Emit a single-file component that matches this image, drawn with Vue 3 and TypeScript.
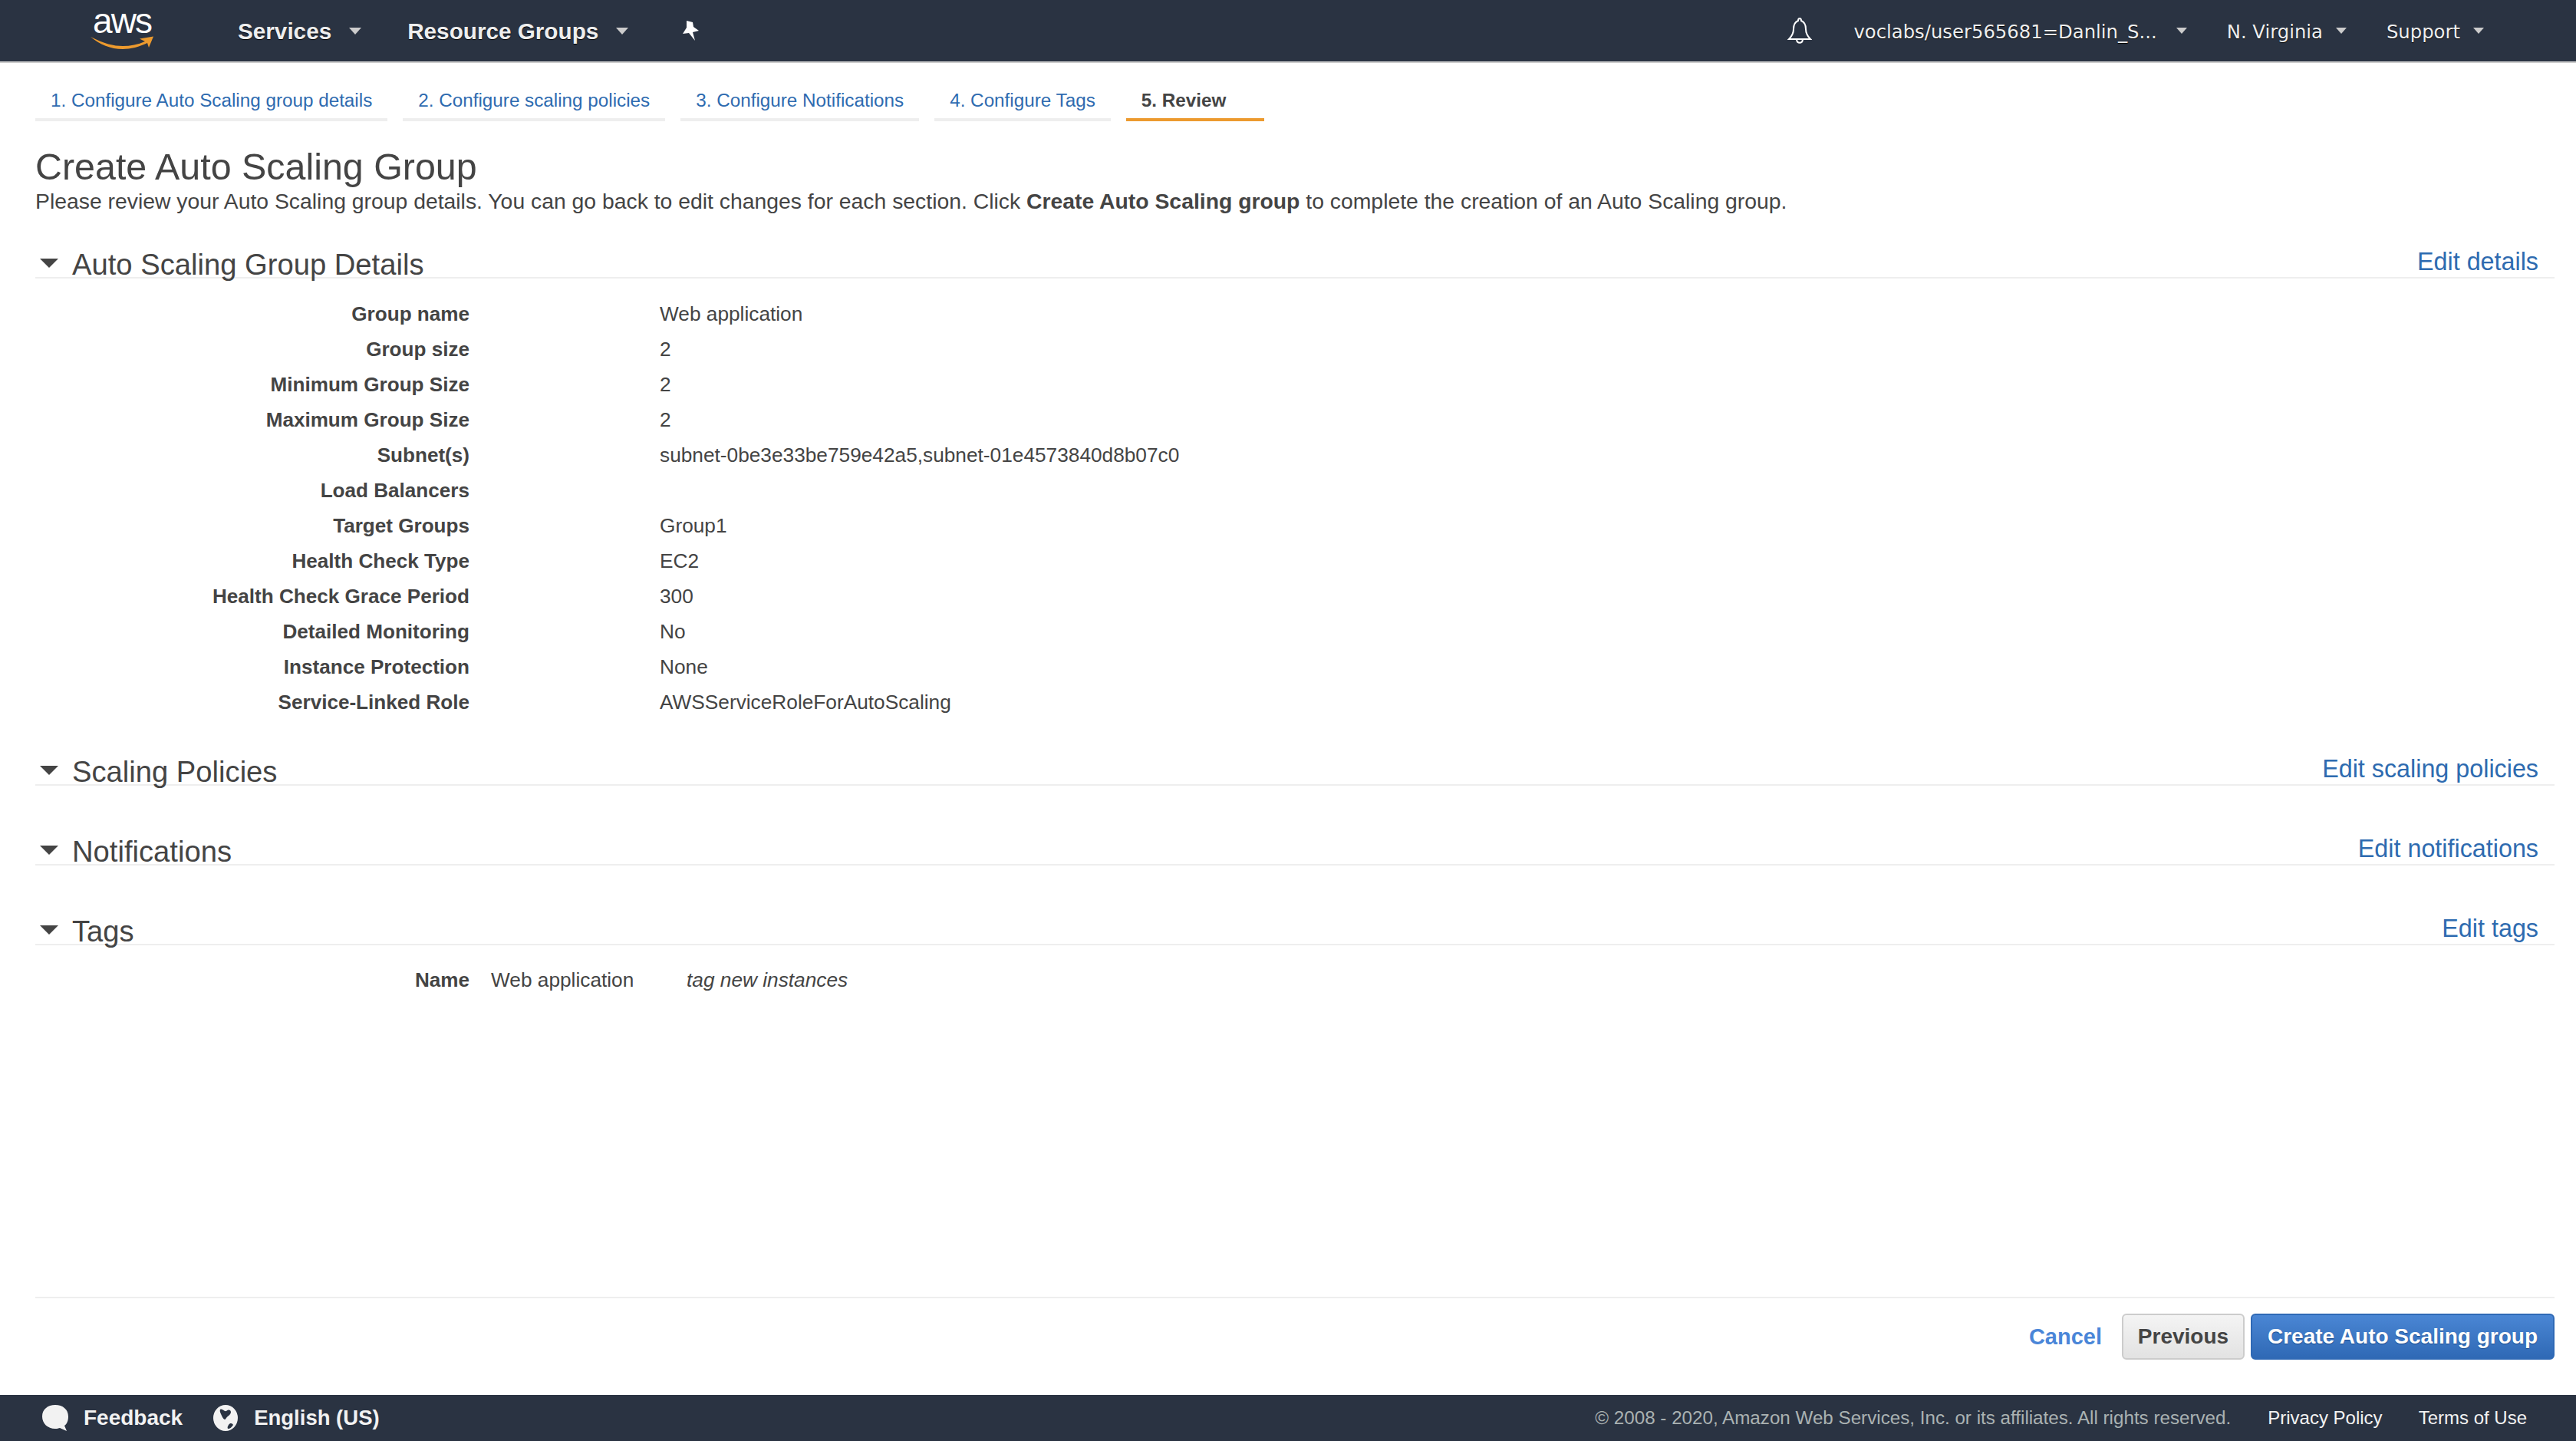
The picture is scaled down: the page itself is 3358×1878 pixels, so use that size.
<script setup lang="ts">
const tabs = [
  { label: '1. Configure Auto Scaling group details', active: false },
  { label: '2. Configure scaling policies', active: false },
  { label: '3. Configure Notifications', active: false },
  { label: '4. Configure Tags', active: false },
  { label: '5. Review', active: true },
]
const rows: [string, string][] = [
  ['Group name', 'Web application'],
  ['Group size', '2'],
  ['Minimum Group Size', '2'],
  ['Maximum Group Size', '2'],
  ['Subnet(s)', 'subnet-0be3e33be759e42a5,subnet-01e4573840d8b07c0'],
  ['Load Balancers', ''],
  ['Target Groups', 'Group1'],
  ['Health Check Type', 'EC2'],
  ['Health Check Grace Period', '300'],
  ['Detailed Monitoring', 'No'],
  ['Instance Protection', 'None'],
  ['Service-Linked Role', 'AWSServiceRoleForAutoScaling'],
]
</script>

<template>
  <div class="page">
    <header class="top">
      <div class="logo">
        <span class="logo-text">aws</span>
        <svg class="smile" viewBox="0 0 82 18" width="82" height="18">
          <path d="M0 1 C18 10 30 13 42 13 C52 13 62 11 71 7 L64 3.5 L82 .5 L76 15 L74 9 C64 14 52 17 42 17 C26 17 12 11 0 1 Z" fill="#ec9a2e" />
        </svg>
      </div>
      <span class="nav-main services">Services</span><i class="caret big"></i>
      <span class="nav-main groups">Resource Groups</span><i class="caret big"></i>
      <svg class="pin" viewBox="0 0 26 28" width="26" height="28">
        <path d="M9 1 L17 3 L18 9 L25 14 L17 16 L20 27 L12 17 L4 18 L9 10 Z" fill="#fff" />
      </svg>
      <div class="spacer"></div>
      <svg class="bell" viewBox="0 0 32 36" width="32" height="36">
        <path d="M16 2 C15 2 14 3 14 5 C9 7 8 11 8 16 C8 22 6 25 2 29 L30 29 C26 25 24 22 24 16 C24 11 23 7 18 5 C18 3 17 2 16 2 Z M12 30 C13 35 19 35 20 30" fill="none" stroke="#fff" stroke-width="2" />
      </svg>
      <span class="nav-sub user">voclabs/user565681=Danlin_S...</span><i class="caret"></i>
      <span class="nav-sub region">N. Virginia</span><i class="caret"></i>
      <span class="nav-sub support">Support</span><i class="caret"></i>
    </header>

    <main class="main">
      <nav class="tabs">
        <a v-for="t in tabs" :key="t.label" class="tab" :class="{ active: t.active }">{{ t.label }}</a>
      </nav>

      <h1 class="title">Create Auto Scaling Group</h1>
      <p class="intro">Please review your Auto Scaling group details. You can go back to edit changes for each section. Click <b>Create Auto Scaling group</b> to complete the creation of an Auto Scaling group.</p>

      <section class="section first">
        <div class="sec-head">
          <i class="tri"></i><h2>Auto Scaling Group Details</h2>
          <a class="edit">Edit details</a>
        </div>
        <div class="details">
          <div v-for="r in rows" :key="r[0]" class="row">
            <span class="lab">{{ r[0] }}</span><span class="val">{{ r[1] }}</span>
          </div>
        </div>
      </section>

      <section class="section policies">
        <div class="sec-head">
          <i class="tri"></i><h2>Scaling Policies</h2>
          <a class="edit">Edit scaling policies</a>
        </div>
      </section>

      <section class="section notes">
        <div class="sec-head">
          <i class="tri"></i><h2>Notifications</h2>
          <a class="edit">Edit notifications</a>
        </div>
      </section>

      <section class="section notes">
        <div class="sec-head">
          <i class="tri"></i><h2>Tags</h2>
          <a class="edit">Edit tags</a>
        </div>
        <div class="tag-row">
          <span class="lab">Name</span>
          <span class="tag-val">Web application</span>
          <em class="tag-note">tag new instances</em>
        </div>
      </section>

      <div class="grow"></div>

      <div class="actions">
        <a class="cancel">Cancel</a>
        <button class="btn prev">Previous</button>
        <button class="btn create">Create Auto Scaling group</button>
      </div>
    </main>

    <footer class="foot">
      <svg class="fb-icon" viewBox="0 0 36 36" width="36" height="36">
        <path d="M18 1 C28 1 35 7 35 16 C35 22 33 26 30 28 L33 35 L24 31 C21 32 19 32 18 32 C8 32 1 25 1 16 C1 7 8 1 18 1 Z" fill="#f2f2f2" />
      </svg>
      <span class="foot-strong feedback">Feedback</span>
      <svg class="globe" viewBox="0 0 34 36" width="34" height="36">
        <ellipse cx="17" cy="18" rx="16" ry="17" fill="#f2f2f2" />
        <path d="M10 7 C13 5 15 10 18 9 C21 7 23 7 24 10 C24 14 20 15 18 18 C16 22 14 19 12 15 C11 12 9 10 10 7 Z M21 27 C23 24 26 25 27 27 C25 30 23 32 20 32 C19 30 20 29 21 27 Z" fill="#2a3342" />
      </svg>
      <span class="foot-strong english">English (US)</span>
      <div class="spacer"></div>
      <span class="copy">© 2008 - 2020, Amazon Web Services, Inc. or its affiliates. All rights reserved.</span>
      <a class="foot-link privacy">Privacy Policy</a>
      <a class="foot-link terms">Terms of Use</a>
    </footer>
  </div>
</template>

<style scoped>
.page {
  width: 3358px;
  height: 1878px;
  display: flex;
  flex-direction: column;
  background: #fff;
  font-family: "Liberation Sans", Arial, sans-serif;
  color: #444;
  overflow: hidden;
}
.top {
  height: 82px;
  box-sizing: border-box;
  border-bottom: 2px solid #ccc;
  background: #2a3342;
  display: flex;
  align-items: center;
  color: #fff;
  flex: none;
}
.spacer { flex: 1; }
.logo {
  margin-left: 118px;
  align-self: flex-start;
  width: 82px;
  display: flex;
  flex-direction: column;
  align-items: center;
}
.logo-text {
  font-size: 46px;
  line-height: 54px;
  letter-spacing: -2px;
  color: #fff;
}
.smile { display: block; margin-top: -7px; }
.nav-main {
  font-size: 29.7px;
  font-weight: 700;
  color: #eee;
  text-shadow: 0 1px 1px #000;
  line-height: 40px;
  padding-top: 2px;
}
.services { margin-left: 110px; }
.groups { margin-left: 60px; }
.caret {
  width: 0;
  height: 0;
  border-left: 7px solid transparent;
  border-right: 7px solid transparent;
  border-top: 8px solid #ccc;
  margin-left: 17px;
}
.caret.big { margin-left: 23px; border-left-width: 8px; border-right-width: 8px; border-top-width: 9px; }
.pin { margin-left: 67px; }
.bell { margin-right: 54px; }
.nav-sub {
  font-family: "DejaVu Sans", sans-serif;
  font-size: 24.3px;
  color: #eee;
  text-shadow: 0 1px 1px #000;
  padding-top: 2px;
}
.user + .caret { margin-left: 25px; }
.region { margin-left: 52px; }
.support { margin-left: 52px; }
.top > i:last-child { margin-right: 120px; }

.main {
  flex: 1;
  min-height: 0;
  display: flex;
  flex-direction: column;
  padding: 0 28px 0 46px;
}
.tabs { display: flex; gap: 20px; margin-top: 30px; }
.tab {
  font-size: 24.25px;
  line-height: 38px;
  height: 42px;
  padding: 0 20px;
  color: #2e6bb0;
  border-bottom: 4px solid #eee;
}
.tab.active {
  color: #444;
  font-weight: 700;
  border-bottom-color: #ec9a2e;
  min-width: 140px;
}
.title {
  margin: 30px 0 0;
  font-size: 48.4px;
  line-height: 58px;
  font-weight: 400;
}
.intro {
  margin: 0;
  font-size: 28.35px;
  line-height: 32px;
  color: #444;
}
.section { display: block; }
.section.first { margin-top: 37px; }
.section.policies { margin-top: 38px; }
.section.notes { margin-top: 56px; }
.sec-head {
  display: flex;
  align-items: center;
  height: 48px;
  border-bottom: 2px solid #eee;
  box-sizing: border-box;
}
.tri {
  width: 0;
  height: 0;
  border-left: 12px solid transparent;
  border-right: 12px solid transparent;
  border-top: 12px solid #444;
  margin-left: 6px;
  margin-right: 18px;
  position: relative;
  top: 5px;
}
.sec-head h2 {
  margin: 0;
  font-size: 38.2px;
  font-weight: 400;
  line-height: 48px;
  position: relative;
  top: 7px;
}
.edit {
  margin-left: auto;
  margin-right: 21px;
  font-size: 32.3px;
  color: #2e6bb0;
  position: relative;
  top: 3px;
}
.details { padding-top: 23px; }
.row {
  display: flex;
  height: 46px;
  align-items: center;
  font-size: 26.25px;
}
.lab {
  flex: none;
  width: 566px;
  text-align: right;
  font-weight: 700;
  font-size: 26.1px;
  color: #444;
}
.val { margin-left: 248px; }
.tag-row {
  display: flex;
  align-items: center;
  height: 46px;
  margin-top: 22px;
  font-size: 26.25px;
}
.tag-val { margin-left: 28px; width: 255px; }
.tag-note { font-style: italic; }
.grow { flex: 1; }
.actions {
  border-top: 2px solid #eee;
  height: 128px;
  box-sizing: border-box;
  display: flex;
  justify-content: flex-end;
  align-items: flex-start;
  padding-top: 20px;
  gap: 8px;
  font-size: 28px;
  font-weight: 700;
}
.cancel {
  color: #4a86d8;
  line-height: 60px;
  margin-right: 18px;
  font-size: 29px;
}
.btn {
  font: inherit;
  height: 60px;
  border-radius: 6px;
  padding: 0;
  cursor: pointer;
}
.prev {
  width: 160px;
  color: #444;
  background: linear-gradient(#f4f4f4, #e2e2e2);
  border: 2px solid #ccc;
}
.create {
  width: 396px;
  color: #fff;
  background: linear-gradient(#4a86d4, #2f69b5);
  border: 2px solid #2f69b5;
  text-shadow: 0 1px 1px #1d4a8a;
}
.foot {
  height: 60px;
  flex: none;
  background: #2a3342;
  display: flex;
  align-items: center;
  padding-left: 54px;
  color: #eee;
}
.foot-strong { font-size: 28px; font-weight: 700; color: #f2f2f2; }
.english { font-size: 27.5px; }
.feedback { margin-left: 19px; margin-right: 39px; }
.globe { margin-right: 20px; }
.copy { font-size: 24.2px; color: #aab2b2; }
.foot-link { font-size: 24px; color: #f2f2f2; }
.privacy { margin-left: 48px; }
.terms { margin-left: 47px; margin-right: 64px; }
</style>
